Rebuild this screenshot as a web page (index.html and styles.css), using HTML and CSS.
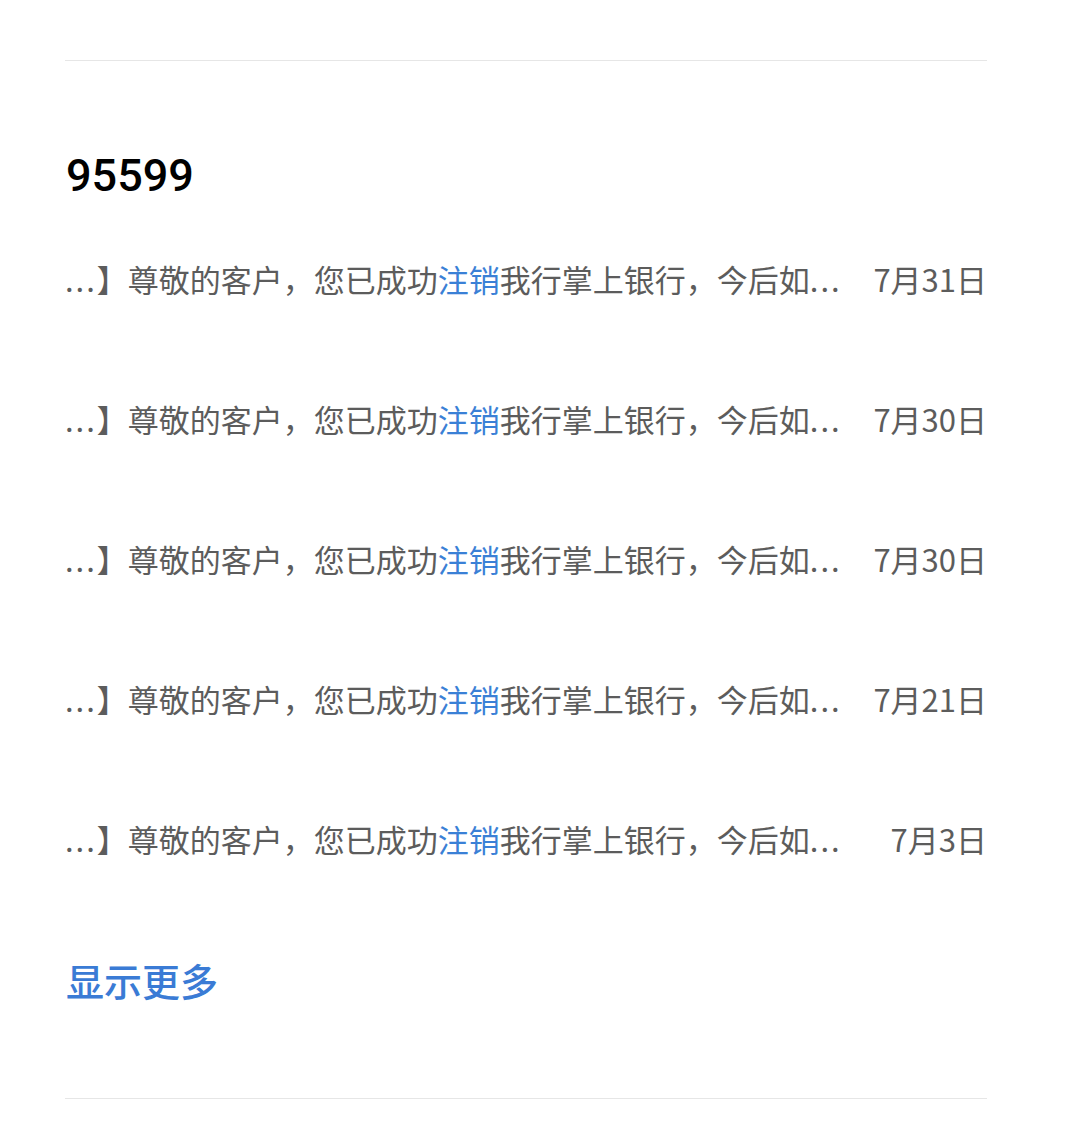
FILE: index.html
```html
<!DOCTYPE html>
<html lang="zh-CN">
<head>
    <meta charset="UTF-8">
    <meta name="viewport" content="width=device-width, initial-scale=1.0">
    <title>95599</title>
    <link rel="stylesheet" href="styles.css">
</head>
<body>
    <div class="card">
        <h1 class="sender">95599</h1>
        <ul class="messages">
            <li class="message">
                <span class="snippet"><span class="dots">...</span>】尊敬的客户，您已成功<em>注销</em>我行掌上银行，今后如<span class="dots">...</span></span>
                <span class="date">7月31日</span>
            </li>
            <li class="message">
                <span class="snippet"><span class="dots">...</span>】尊敬的客户，您已成功<em>注销</em>我行掌上银行，今后如<span class="dots">...</span></span>
                <span class="date">7月30日</span>
            </li>
            <li class="message">
                <span class="snippet"><span class="dots">...</span>】尊敬的客户，您已成功<em>注销</em>我行掌上银行，今后如<span class="dots">...</span></span>
                <span class="date">7月30日</span>
            </li>
            <li class="message">
                <span class="snippet"><span class="dots">...</span>】尊敬的客户，您已成功<em>注销</em>我行掌上银行，今后如<span class="dots">...</span></span>
                <span class="date">7月21日</span>
            </li>
            <li class="message">
                <span class="snippet"><span class="dots">...</span>】尊敬的客户，您已成功<em>注销</em>我行掌上银行，今后如<span class="dots">...</span></span>
                <span class="date">7月3日</span>
            </li>
        </ul>
        <div class="more">显示更多</div>
    </div>
</body>
</html>
```

FILE: styles.css
```css
body {
    margin: 0;
    padding-top: 60px;
    background: #fff;
    font-family: "Noto Sans CJK SC", "Noto Sans", sans-serif;
}
.card {
    width: 922px;
    margin-left: 65px;
    border-top: 1px solid #e6e6e6;
    border-bottom: 1px solid #e6e6e6;
}
.sender {
    margin: 87px 0 6px 1px;
    font-family: Roboto, "Noto Sans", sans-serif;
    font-size: 45px;
    font-weight: 500;
    line-height: 56px;
    color: #000;
}
.messages {
    list-style: none;
    margin: 0;
    padding: 0;
}
.message {
    height: 140px;
    display: flex;
    align-items: center;
    justify-content: space-between;
    font-size: 31px;
    line-height: 36px;
    color: #5c5c5c;
    padding-bottom: 3px;
    box-sizing: border-box;
}
.snippet .dots {
    letter-spacing: 2px;
}
.snippet em {
    font-style: normal;
    color: #3a80d6;
}
.more {
    margin-top: 45px;
    margin-bottom: 93px;
    padding-left: 1px;
    font-size: 38px;
    font-weight: 500;
    line-height: 50px;
    color: #3a7bd5;
}
```
